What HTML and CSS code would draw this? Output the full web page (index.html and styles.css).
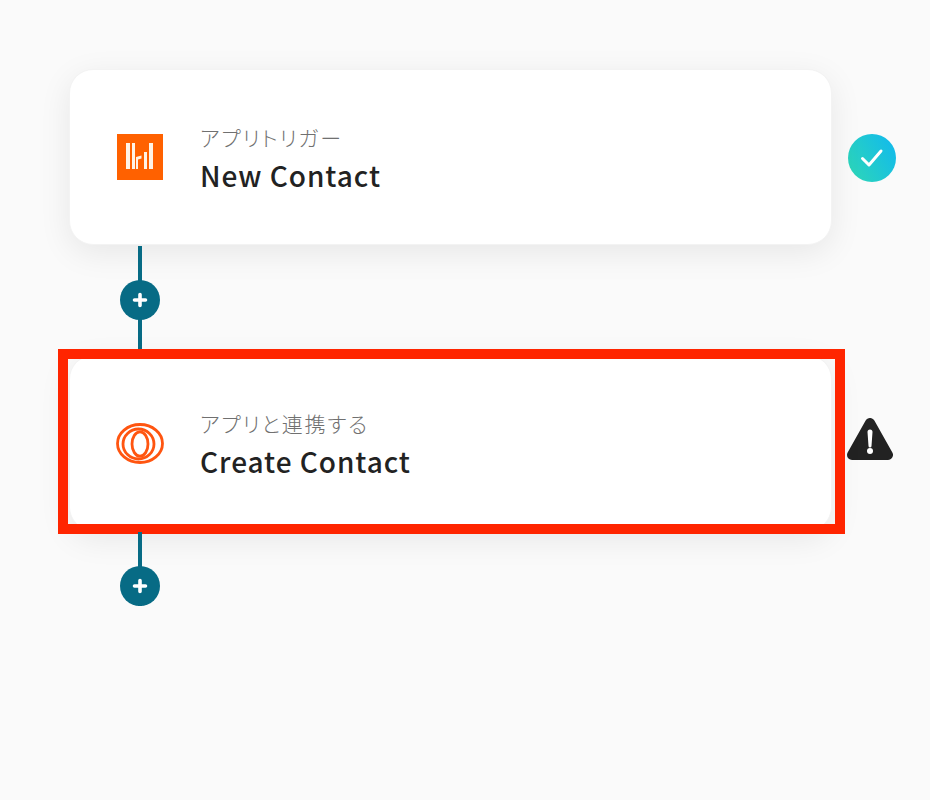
FILE: index.html
```html
<!DOCTYPE html>
<html lang="ja">
<head>
    <meta charset="UTF-8">
    <title>New Contact</title>
    <link rel="stylesheet" href="styles.css">
</head>
<body>
    <div class="flow">

        <div class="step">
            <div class="card">
                <div class="app-icon">
                    <svg width="46" height="46" viewBox="0 0 46 46">
                        <rect width="46" height="46" fill="#ff6100"/>
                        <path d="M9 9h4v26H9zM15 9h3v26h-3zM19 23l5.500-1.500v3L21 25.500V35h-2zM27 18h3v17h-3zM32 9h4v26h-4z" fill="#fff3e6"/>
                    </svg>
                </div>
                <div class="card-text">
                    <div class="card-label">アプリトリガー</div>
                    <div class="card-title">New Contact</div>
                </div>
            </div>
            <div class="status">
                <div class="status-ok">
                    <svg width="48" height="48" viewBox="0 0 48 48">
                        <path d="M14.500 24.500l6.500 6.500L33 17" fill="none" stroke="#fff" stroke-width="3" stroke-linecap="round" stroke-linejoin="round"/>
                    </svg>
                </div>
            </div>
        </div>

        <div class="connector">
            <div class="add-btn">
                <svg width="16" height="16" viewBox="0 0 16 16"><path d="M8 2.500v11M2.500 8h11" stroke="#fff" stroke-width="3.600" stroke-linecap="round"/></svg>
            </div>
        </div>

        <div class="step">
            <div class="card card-marked">
                <div class="app-icon">
                    <svg width="48" height="41" viewBox="0 0 48 41" fill="none" stroke="#ff5510" stroke-width="2.800">
                        <ellipse cx="24" cy="20.500" rx="22.500" ry="19"/>
                        <ellipse cx="22.500" cy="21" rx="15.500" ry="15"/>
                        <ellipse cx="24" cy="21" rx="8" ry="12.200"/>
                    </svg>
                </div>
                <div class="card-text">
                    <div class="card-label">アプリと連携する</div>
                    <div class="card-title">Create Contact</div>
                </div>
            </div>
            <div class="status status-alert">
                <svg width="46" height="42" viewBox="0 0 46 42">
                    <path d="M23 5L41 37H5Z" fill="#222" stroke="#222" stroke-width="10" stroke-linejoin="round"/>
                    <path d="M20.500 14a2.500 2.500 0 0 1 5 0L24.500 28a1.500 1.500 0 0 1-3 0Z" fill="#fff"/>
                    <circle cx="23" cy="33" r="3" fill="#fff"/>
                </svg>
            </div>
        </div>

        <div class="connector connector-end">
            <div class="add-btn">
                <svg width="16" height="16" viewBox="0 0 16 16"><path d="M8 2.500v11M2.500 8h11" stroke="#fff" stroke-width="3.600" stroke-linecap="round"/></svg>
            </div>
        </div>

    </div>
</body>
</html>
```

FILE: styles.css
```css
body {
    margin: 0;
    background-color: #fafafa;
    color: #222;
    font-family: "Noto Sans CJK JP", "Noto Sans", sans-serif;
}
.flow {
    padding: 69px 0 0 69px;
}
.step {
    display: flex;
    align-items: center;
}
.card {
    position: relative;
    display: flex;
    align-items: center;
    flex-shrink: 0;
    width: 763px;
    height: 176px;
    box-sizing: border-box;
    padding-left: 46px;
    background-color: #fff;
    border: 1px solid #f3f3f3;
    border-radius: 24px;
    box-shadow: 0 8px 32px rgba(0, 0, 0, 0.08);
}
/* red frame drawn over the card */
.card-marked::after {
    content: "";
    position: absolute;
    top: -7px;
    left: -12px;
    right: -14px;
    bottom: -4px;
    border: 10px solid #ff2500;
}
.app-icon {
    display: flex;
    justify-content: center;
    width: 50px;
    margin-left: -1px;
    margin-right: 35px;
}
.card-label {
    margin-top: 3px;
    font-size: 21px;
    line-height: 28px;
    font-weight: 300;
    letter-spacing: 1.8px;
    font-feature-settings: "palt";
    color: #707070;
}
.card-title {
    margin-top: 5px;
    font-size: 28px;
    line-height: 38px;
    font-weight: 500;
    letter-spacing: 0.95px;
}
.status {
    display: flex;
    justify-content: flex-start;
    width: 48px;
    margin-left: 16px;
    margin-top: 2px;
}
.status-alert {
    margin-left: 15px;
    margin-top: -8px;
}
.status-ok {
    width: 48px;
    height: 48px;
    border-radius: 50%;
    background: linear-gradient(60deg, #2fd8b4, #10b8f0);
}
.connector {
    display: flex;
    align-items: center;
    position: relative;
    width: 40px;
    height: 110px;
    box-sizing: border-box;
    padding-bottom: 1px;
    margin-left: 51px;
}
.connector::before {
    content: "";
    position: absolute;
    top: 1px;
    bottom: 0;
    left: 18px;
    width: 4px;
    background-color: #076b85;
}
.connector-end {
    height: 75px;
    padding-bottom: 0;
    align-items: flex-end;
}
.add-btn {
    position: relative;
    display: flex;
    align-items: center;
    justify-content: center;
    width: 40px;
    height: 40px;
    border-radius: 50%;
    background-color: #076b85;
}
```
